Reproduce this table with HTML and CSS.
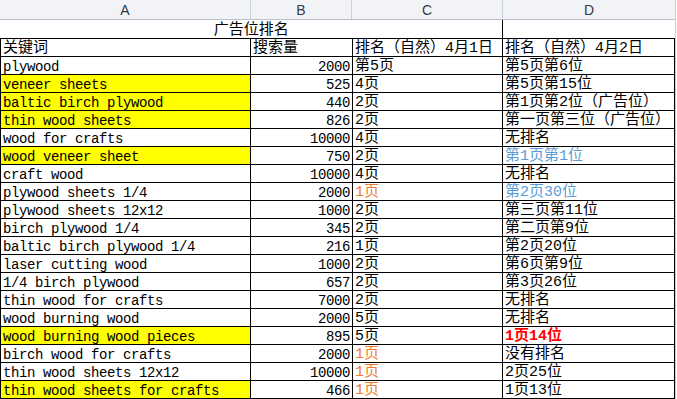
FILE: index.html
```html
<!DOCTYPE html>
<html lang="zh-CN">
<head>
<meta charset="utf-8">
<title>广告位排名</title>
<link rel="stylesheet" href="styles.css">
</head>
<body>
<div class="sheet">
  <div class="colhead">
    <div class="ch">A</div>
    <div class="ch">B</div>
    <div class="ch">C</div>
    <div class="ch last">D</div>
  </div>
  <table class="grid">
    <colgroup><col class="ca"><col class="cb"><col class="cc"><col class="cd"></colgroup>
    <tr class="title"><td colspan="3" class="t">广告位排名</td><td class="t d1"></td></tr>
    <tr><td>关键词</td><td>搜索量</td><td>排名（自然）4月1日</td><td>排名（自然）4月2日</td></tr>
    <tr><td class="en">plywood</td><td class="en num">2000</td><td>第5页</td><td>第5页第6位</td></tr>
    <tr><td class="en y">veneer sheets</td><td class="en num">525</td><td>4页</td><td>第5页第15位</td></tr>
    <tr><td class="en y">baltic birch plywood</td><td class="en num">440</td><td>2页</td><td>第1页第2位（广告位）</td></tr>
    <tr><td class="en y">thin wood sheets</td><td class="en num">826</td><td>2页</td><td>第一页第三位（广告位）</td></tr>
    <tr><td class="en">wood for crafts</td><td class="en num">10000</td><td>4页</td><td>无排名</td></tr>
    <tr><td class="en y">wood veneer sheet</td><td class="en num">750</td><td>2页</td><td class="b">第1页第1位</td></tr>
    <tr><td class="en">craft wood</td><td class="en num">10000</td><td>4页</td><td>无排名</td></tr>
    <tr><td class="en">plywood sheets 1/4</td><td class="en num">2000</td><td class="o">1页</td><td class="b">第2页30位</td></tr>
    <tr><td class="en">plywood sheets 12x12</td><td class="en num">1000</td><td>2页</td><td>第三页第11位</td></tr>
    <tr><td class="en">birch plywood 1/4</td><td class="en num">345</td><td>2页</td><td>第二页第9位</td></tr>
    <tr><td class="en">baltic birch plywood 1/4</td><td class="en num">216</td><td>1页</td><td>第2页20位</td></tr>
    <tr><td class="en">laser cutting wood</td><td class="en num">1000</td><td>2页</td><td>第6页第9位</td></tr>
    <tr><td class="en">1/4 birch plywood</td><td class="en num">657</td><td>2页</td><td>第3页26位</td></tr>
    <tr><td class="en">thin wood for crafts</td><td class="en num">7000</td><td>2页</td><td>无排名</td></tr>
    <tr><td class="en">wood burning wood</td><td class="en num">2000</td><td>5页</td><td>无排名</td></tr>
    <tr><td class="en y">wood burning wood pieces</td><td class="en num">895</td><td>5页</td><td class="r">1页14位</td></tr>
    <tr><td class="en">birch wood for crafts</td><td class="en num">2000</td><td class="o">1页</td><td>没有排名</td></tr>
    <tr><td class="en">thin wood sheets 12x12</td><td class="en num">10000</td><td class="o">1页</td><td>2页25位</td></tr>
    <tr><td class="en y">thin wood sheets for crafts</td><td class="en num">466</td><td class="o">1页</td><td>1页13位</td></tr>
  </table>
</div>
</body>
</html>
```

FILE: styles.css
```css
html, body {
  margin: 0;
  padding: 0;
  background: #ffffff;
}

.sheet {
  width: 675px;
  height: 399px;
  border-right: 1px solid #c9ced6;
  overflow: hidden;
}

.colhead {
  display: grid;
  grid-template-columns: 251px 101px 151px 172px;
  height: 19px;
  background: #f1f3f6;
  border-bottom: 1px solid #b8bfc9;
}

.ch {
  border-right: 1px solid #cdd2d9;
  font-family: "Liberation Sans", Arial, sans-serif;
  font-size: 14px;
  color: #333a44;
  display: flex;
  align-items: center;
  justify-content: center;
}

.ch.last {
  border-right: none;
}

.grid {
  width: 675px;
  table-layout: fixed;
  border-collapse: collapse;
  font-family: "Liberation Mono", "Noto Sans CJK SC", monospace;
  font-size: 15px;
  color: #000;
}

.ca { width: 250px; }
.cb { width: 102px; }
.cc { width: 150px; }
.cd { width: 172px; }

.grid td {
  border: 1px solid #000;
  padding: 3px 2px 0 2px;
  height: 14px;
  line-height: 14px;
  white-space: nowrap;
  vertical-align: top;
}

.grid .title td {
  border-top: none;
  border-left: none;
  border-right: none;
  padding-top: 4px;
}

.grid .title td.t:first-child {
  text-align: center;
}

.grid .title td.d1 {
  border-left: 1px solid #000;
}

.grid td.en {
  font-size: 14px;
  letter-spacing: -0.4px;
}

.grid td.num {
  text-align: right;
  letter-spacing: -0.4px;
}

.grid td.y {
  background: #ffff00;
}

.grid td.o {
  color: #ed7d31;
}

.grid td.b {
  color: #5b9bd5;
}

.grid td.r {
  color: #ff0000;
  font-weight: bold;
}
```
